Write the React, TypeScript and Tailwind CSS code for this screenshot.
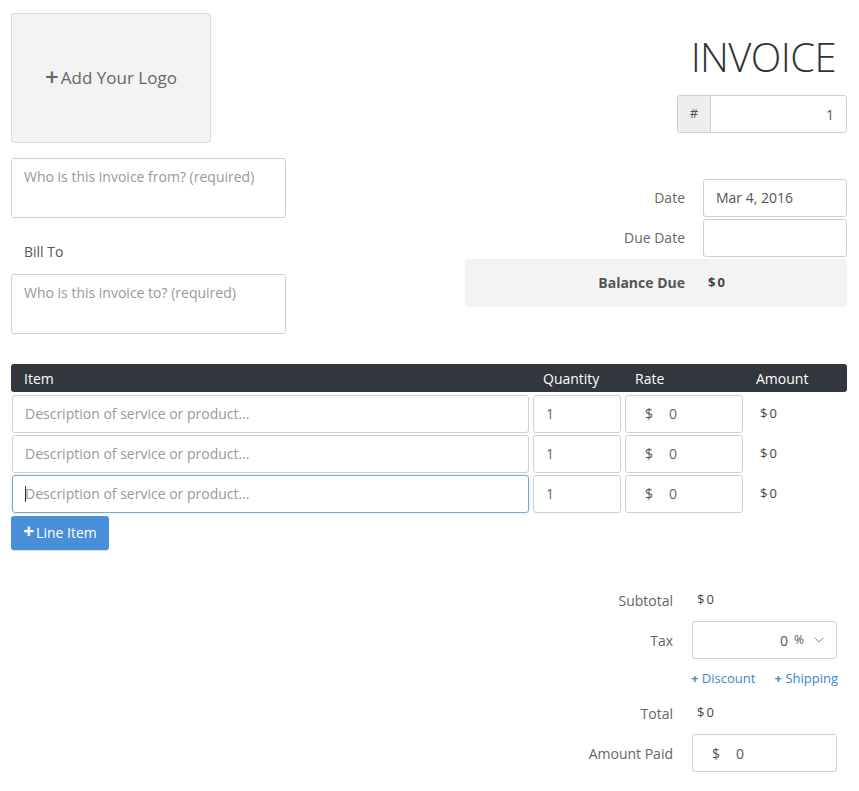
import { ChevronDown } from 'lucide-react';

const App = () => {
  // three empty line items
  const rows = [
    { desc: '', qty: '1', rate: '0', focus: false },
    { desc: '', qty: '1', rate: '0', focus: false },
    { desc: '', qty: '1', rate: '0', focus: true },
  ];

  return (
    <div
      className="min-h-screen bg-white text-[14px] text-[#555]"
      style={{ fontFamily: '"Open Sans", "Noto Sans", Arial, sans-serif' }}
    >
      <div className="pl-[11px] pr-[12px] pt-[13px]">
        {/* Header */}
        <div className="flex justify-between">
          {/* Left */}
          <div className="w-[275px]">
            <div className="w-[200px] h-[130px] bg-[#f3f3f3] border border-[#dcdcdc] rounded-[3px] flex items-center justify-center text-[17px] text-[#666]">
              <span className="text-[24px] leading-none mr-[2px] -mt-[3px] font-semibold">+</span>
              Add Your Logo
            </div>
            <div className="mt-[15px] h-[60px] border border-[#cfcfcf] rounded-[3px] px-[12px] pt-[7px] text-[#999]">
              Who is this invoice from? (required)
            </div>
            <div className="h-[56px] pl-[13px] flex items-center pt-[10px] text-[#555]">Bill To</div>
            <div className="h-[60px] border border-[#cfcfcf] rounded-[3px] px-[12px] pt-[7px] text-[#999]">
              Who is this invoice to? (required)
            </div>
          </div>

          {/* Right */}
          <div className="w-[382px] flex flex-col items-end">
            <div className="pr-[11px] mt-[19px] text-[40px] font-light leading-[50px] text-[#333] tracking-[-0.6px]">
              INVOICE
            </div>
            <div className="mt-[13px] w-[170px] h-[38px] flex border border-[#cfcfcf] rounded-[3px] overflow-hidden">
              <div className="w-[33px] bg-[#eeeeee] border-r border-[#cfcfcf] flex items-center justify-center text-[13px] text-[#555]">
                #
              </div>
              <div className="flex-1 flex items-center justify-end pr-[12px] text-[#555]">1</div>
            </div>

            <div className="mt-[46px] w-full grid grid-cols-[1fr_144px] gap-x-[18px] gap-y-[2px]">
              <div className="flex items-center justify-end pb-[1px] text-[#666]">Date</div>
              <div className="h-[38px] border border-[#cfcfcf] rounded-[3px] flex items-center px-[12px] pb-[1px] text-[#555]">
                Mar 4, 2016
              </div>
              <div className="flex items-center justify-end pb-[1px] text-[#666]">Due Date</div>
              <div className="h-[38px] border border-[#cfcfcf] rounded-[3px]"></div>
            </div>
            <div className="mt-[2px] w-full h-[48px] bg-[#f3f3f3] rounded-[3px] grid grid-cols-[1fr_144px] gap-x-[18px]">
              <div className="flex items-center justify-end pb-[1px] font-bold text-[#555]">Balance Due</div>
              <div className="flex items-center pl-[5px] pb-[1px] font-bold text-[13px] text-[#444]">
                <span>$</span>
                <span className="ml-[2px]">0</span>
              </div>
            </div>
          </div>
        </div>

        {/* Items table */}
        <div className="mt-[30px]">
          <div className="h-[28px] bg-[#32373d] rounded-[3px] grid grid-cols-[518px_92px_122px_1fr] items-center text-white">
            <div className="pl-[13px]">Item</div>
            <div className="pl-[14px]">Quantity</div>
            <div className="pl-[14px]">Rate</div>
            <div className="pl-[13px]">Amount</div>
          </div>

          <div className="mt-[3px] flex flex-col gap-[2px]">
            {rows.map((row, i) => (
              <div key={i} className="grid grid-cols-[517px_88px_118px_1fr] gap-x-[4px] pl-[1px] h-[38px]">
                <div
                  className={`relative border rounded-[3px] flex items-center px-[12px] pb-[1px] text-[#999] ${
                    row.focus
                      ? 'border-[#78a8d4] shadow-[0_0_3px_rgba(102,175,233,0.35)]'
                      : 'border-[#cfcfcf]'
                  }`}
                >
                  {row.focus && <span className="absolute left-[12px] top-[10px] w-px h-[16px] bg-[#333]"></span>}
                  Description of service or product...
                </div>
                <div className="border border-[#cfcfcf] rounded-[3px] flex items-center px-[12px] pb-[1px] text-[#666]">
                  {row.qty}
                </div>
                <div className="border border-[#cfcfcf] rounded-[3px] flex items-center pl-[19px] pb-[1px] text-[#666]">
                  <span className="text-[#555]">$</span>
                  <span className="ml-[16px]">{row.rate}</span>
                </div>
                <div className="flex items-center pl-[13px] text-[13px] text-[#444]">
                  <span>$</span>
                  <span className="ml-[2px]">0</span>
                </div>
              </div>
            ))}
          </div>

          <button className="mt-[3px] h-[34px] w-[98px] bg-[#4a90d9] hover:bg-[#3f82c8] text-white rounded-[3px] flex items-center justify-center pb-[1px] shadow-[0_1px_1px_rgba(0,0,0,0.15)]">
            <span className="text-[19px] leading-none mr-[2px] -mt-[2px] font-bold">+</span>
            Line Item
          </button>
        </div>

        {/* Totals */}
        <div className="mt-[38px] flex justify-end pr-[10px]">
          <div className="grid grid-cols-[auto_145px] gap-x-[19px]">
            <div className="h-[24px] flex items-center justify-end text-[#666]">Subtotal</div>
            <div className="h-[24px] flex items-center pl-[5px] text-[13px] text-[#444]">
              <span>$</span>
              <span className="ml-[2px]">0</span>
            </div>

            <div className="mt-[9px] h-[38px] flex items-center justify-end text-[#666]">Tax</div>
            <div className="mt-[9px] h-[38px] border border-[#cfcfcf] rounded-[3px] flex items-center justify-end pr-[9px] text-[#555]">
              <span>0</span>
              <span className="ml-[6px] text-[12px]">%</span>
              <ChevronDown className="ml-[7px] w-[16px] h-[16px] text-[#888]" strokeWidth={1.5} />
            </div>

            <div className="h-[40px]"></div>
            <div className="h-[40px] flex items-center justify-between -mr-[1px] -ml-[1px] text-[13px] text-[#3a87c8]">
              <span>
                <span className="font-bold">+</span> Discount
              </span>
              <span>
                <span className="font-bold">+</span> Shipping
              </span>
            </div>

            <div className="mt-[2px] h-[24px] flex items-center justify-end text-[#666]">Total</div>
            <div className="mt-[2px] h-[24px] flex items-center pl-[5px] text-[13px] text-[#444]">
              <span>$</span>
              <span className="ml-[2px]">0</span>
            </div>

            <div className="mt-[9px] h-[38px] flex items-center justify-end text-[#666]">Amount Paid</div>
            <div className="mt-[9px] h-[38px] border border-[#cfcfcf] rounded-[3px] flex items-center pl-[19px] text-[#555]">
              <span>$</span>
              <span className="ml-[16px]">0</span>
            </div>
          </div>
        </div>
      </div>
    </div>
  );
};

export default App;
